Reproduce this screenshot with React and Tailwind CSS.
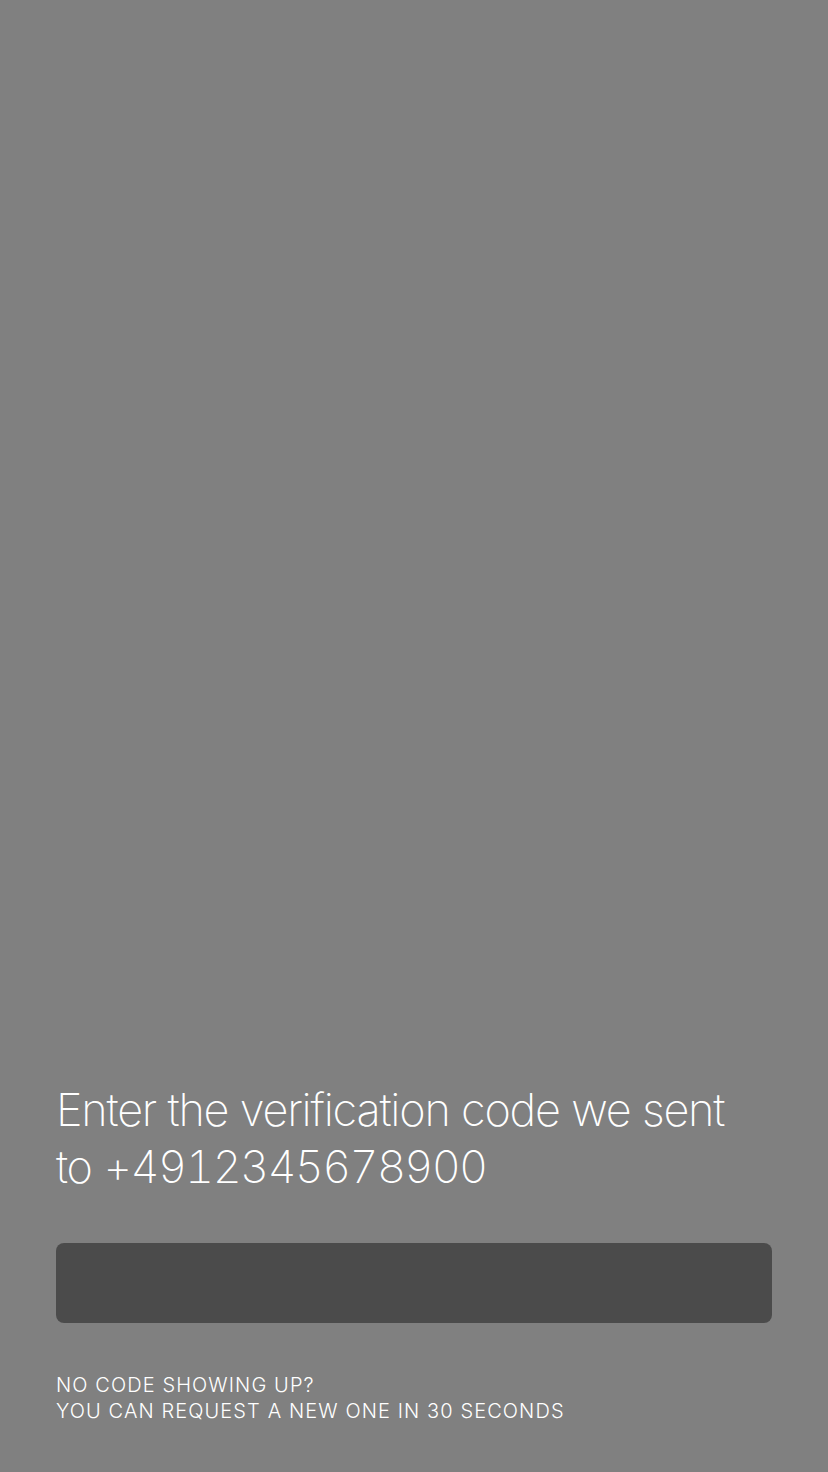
import React from 'react';

const VerifyCode = ({ phone = '+4912345678900', seconds = 30 }) => {
  return (
    <div className="h-[1472px] w-full bg-[#808080] flex flex-col justify-end px-[56px] pb-[48px] text-white font-['Inter','Liberation_Sans',sans-serif]">
      {/* heading */}
      <h1 className="text-[45px] leading-[57px] font-extralight tracking-[-1.2px] mb-[48px]">
        Enter the verification code we sent{' '}
        <span className="whitespace-nowrap">
          to <span className="tabular-nums tracking-[-1.7px]">{phone}</span>
        </span>
      </h1>

      {/* code input */}
      <div className="h-[80px] w-full rounded-[8px] bg-[#4b4b4b] mb-[49px]" />

      {/* hint */}
      <div className="text-[20px] leading-[26px] font-light uppercase tracking-[1.1px]">
        <p>No code showing up?</p>
        <p>You can request a new one in {seconds} seconds</p>
      </div>
    </div>
  );
};

export default function App() {
  return <VerifyCode />;
}
